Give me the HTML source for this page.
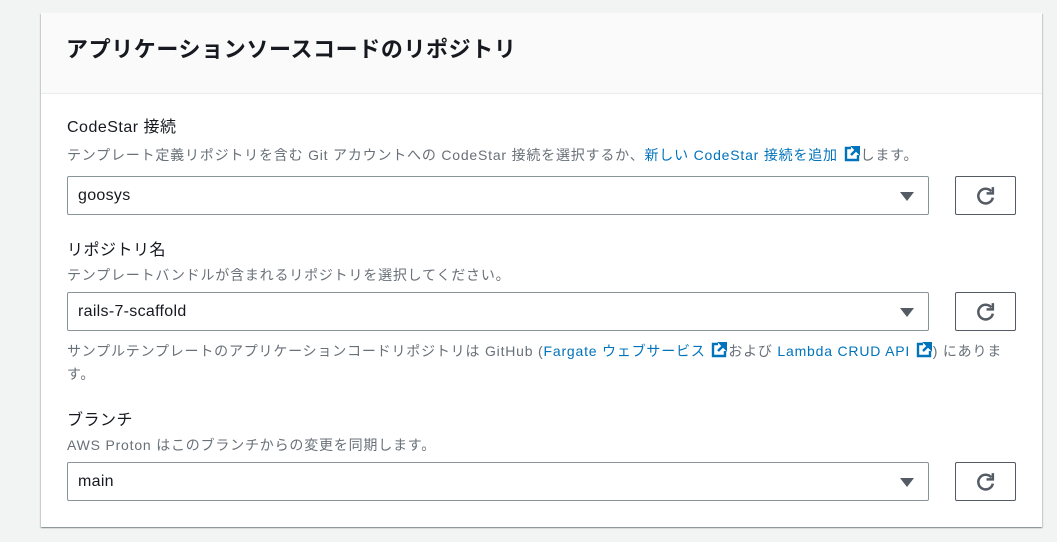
<!DOCTYPE html>
<html><head><meta charset="utf-8"><style>
*{box-sizing:border-box;margin:0;padding:0}
body{width:1057px;height:542px;background:#f2f3f3;font-family:"Liberation Sans","Noto Sans CJK JP",sans-serif;color:#16191f;position:relative;overflow:hidden}
.card{position:absolute;left:41px;top:13px;width:1001px;height:514px;background:#fff;box-shadow:0 1px 1px rgba(0,28,36,.3),1px 1px 1px rgba(0,28,36,.15),-1px 1px 1px rgba(0,28,36,.15)}
.hdr{height:81px;background:#fafafa;border-bottom:1px solid #eaeded;padding:20px 25px}
.hdr h2{font-size:22px;font-weight:bold;line-height:34px;letter-spacing:.6px}
.abs{position:absolute}
.lbl{font-size:16px;line-height:22px;color:#16191f;left:26px;letter-spacing:.5px}
.desc{font-size:14px;line-height:20px;color:#687078;left:26px;white-space:nowrap;letter-spacing:.8px}
.sel{left:26px;width:862px;height:39px;border:1px solid #879596;border-radius:2px;font-size:16px;line-height:37px;padding-left:10px;letter-spacing:.3px}
.sel:after{content:"";position:absolute;right:14px;top:15px;border-left:7px solid transparent;border-right:7px solid transparent;border-top:9px solid #545b64}
.btn{left:914px;width:61px;height:39px;border:1px solid #545b64;border-radius:2px}
.btn svg{position:absolute;left:19px;top:8px}
a{color:#0073bb;text-decoration:none}
.ext{display:inline-block;width:16px;height:16px;vertical-align:-2px;margin:0 1px}
</style></head><body>
<div class="card">
<div class="hdr"><h2>アプリケーションソースコードのリポジトリ</h2></div>
<div class="abs lbl" style="top:104px">CodeStar 接続</div>
<div class="abs desc" style="top:132px">テンプレート定義リポジトリを含む Git アカウントへの CodeStar 接続を選択するか、<a>新しい CodeStar 接続を追加 <svg class="ext" viewBox="0 0 16 16"><path d="M7 2H2v12h12V9" fill="none" stroke="#0073bb" stroke-width="2.4"/><path d="M9 1h6v6zM14 2L7 9" fill="#0073bb" stroke="#0073bb" stroke-width="2.4"/></svg></a>します。</div>
<div class="abs sel" style="top:163px">goosys</div>
<div class="abs btn" style="top:163px"><svg width="21" height="21" viewBox="0 0 20 20"><path d="M15.5 6A7 7 0 1 0 17 12" fill="none" stroke="#545b64" stroke-width="2.4"/><path d="M17 2v6h-6" fill="none" stroke="#545b64" stroke-width="2.4"/></svg></div>
<div class="abs lbl" style="top:227px">リポジトリ名</div>
<div class="abs desc" style="top:252px">テンプレートバンドルが含まれるリポジトリを選択してください。</div>
<div class="abs sel" style="top:279px">rails-7-scaffold</div>
<div class="abs btn" style="top:279px"><svg width="21" height="21" viewBox="0 0 20 20"><path d="M15.5 6A7 7 0 1 0 17 12" fill="none" stroke="#545b64" stroke-width="2.4"/><path d="M17 2v6h-6" fill="none" stroke="#545b64" stroke-width="2.4"/></svg></div>
<div class="abs desc" style="top:327px;line-height:23px;white-space:normal;width:945px">サンプルテンプレートのアプリケーションコードリポジトリは GitHub (<a>Fargate ウェブサービス <svg class="ext" viewBox="0 0 16 16"><path d="M7 2H2v12h12V9" fill="none" stroke="#0073bb" stroke-width="2.4"/><path d="M9 1h6v6zM14 2L7 9" fill="#0073bb" stroke="#0073bb" stroke-width="2.4"/></svg></a>および <a>Lambda CRUD API <svg class="ext" viewBox="0 0 16 16"><path d="M7 2H2v12h12V9" fill="none" stroke="#0073bb" stroke-width="2.4"/><path d="M9 1h6v6zM14 2L7 9" fill="#0073bb" stroke="#0073bb" stroke-width="2.4"/></svg></a>) にあります。</div>
<div class="abs lbl" style="top:397px">ブランチ</div>
<div class="abs desc" style="top:422px">AWS Proton はこのブランチからの変更を同期します。</div>
<div class="abs sel" style="top:449px">main</div>
<div class="abs btn" style="top:449px"><svg width="21" height="21" viewBox="0 0 20 20"><path d="M15.5 6A7 7 0 1 0 17 12" fill="none" stroke="#545b64" stroke-width="2.4"/><path d="M17 2v6h-6" fill="none" stroke="#545b64" stroke-width="2.4"/></svg></div>
</div>
</body></html>
